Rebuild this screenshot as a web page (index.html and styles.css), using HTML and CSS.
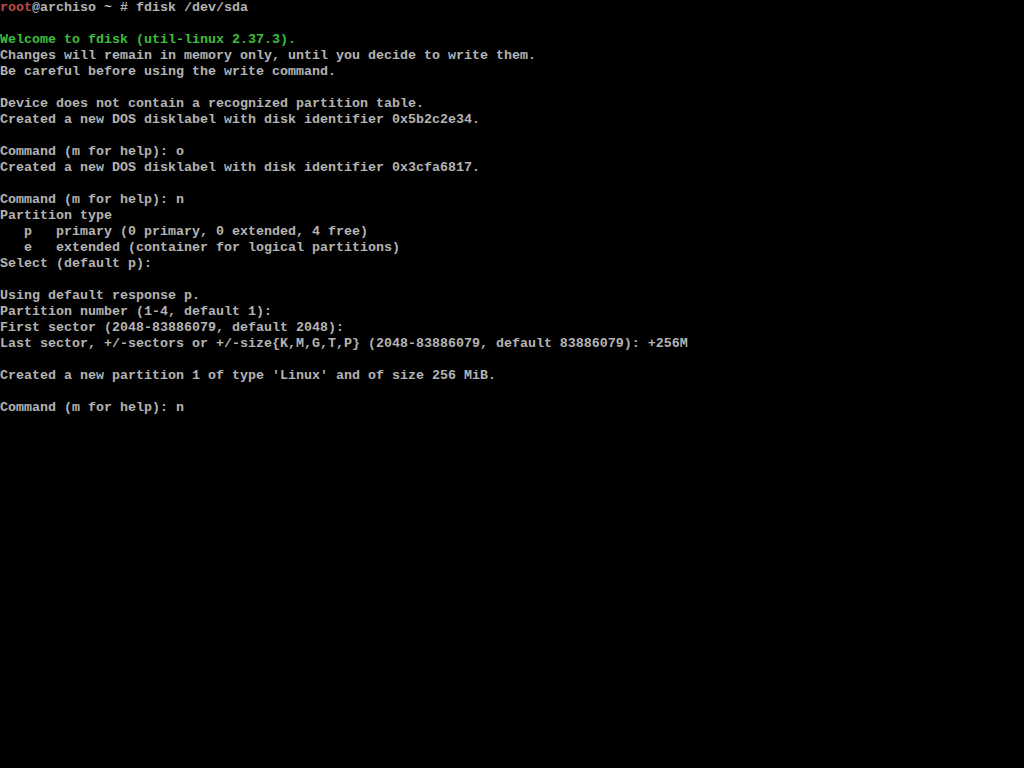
FILE: index.html
```html
<!DOCTYPE html>
<html>
<head>
<meta charset="utf-8">
<link rel="stylesheet" href="styles.css">
</head>
<body>
<pre class="console"><span class="red">root</span>@archiso ~ # fdisk /dev/sda

<span class="green">Welcome to fdisk (util-linux 2.37.3).</span>
Changes will remain in memory only, until you decide to write them.
Be careful before using the write command.

Device does not contain a recognized partition table.
Created a new DOS disklabel with disk identifier 0x5b2c2e34.

Command (m for help): o
Created a new DOS disklabel with disk identifier 0x3cfa6817.

Command (m for help): n
Partition type
   p   primary (0 primary, 0 extended, 4 free)
   e   extended (container for logical partitions)
Select (default p):

Using default response p.
Partition number (1-4, default 1):
First sector (2048-83886079, default 2048):
Last sector, +/-sectors or +/-size{K,M,G,T,P} (2048-83886079, default 83886079): +256M

Created a new partition 1 of type 'Linux' and of size 256 MiB.

Command (m for help): n</pre>
</body>
</html>
```
FILE: styles.css
```css
html, body {
  margin: 0;
  padding: 0;
  background: #000;
  width: 1024px;
  height: 768px;
  overflow: hidden;
}
.console {
  margin: 0;
  padding: 0;
  font-family: "Liberation Mono", "DejaVu Sans Mono", monospace;
  font-size: 13.333px;
  line-height: 16px;
  color: #b4b4b4;
  font-weight: bold;
  white-space: pre;
}
.red { color: #c04a4a; }
.green { color: #3cbf3c; }
```
